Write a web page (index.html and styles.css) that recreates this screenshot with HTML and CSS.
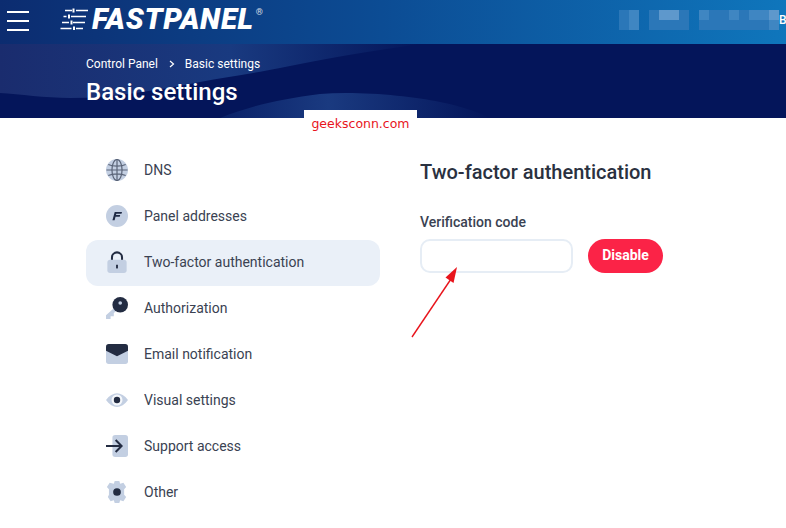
FILE: index.html
```html
<!DOCTYPE html>
<html lang="en">
<head>
    <meta charset="UTF-8">
    <meta name="viewport" content="width=device-width, initial-scale=1.0">
    <title>Basic settings</title>
    <link rel="stylesheet" href="styles.css">
</head>
<body>
    <header class="topbar">
        <button class="burger" aria-label="Menu"><span></span><span></span><span></span></button>
        <svg class="logo-mark" viewBox="0 0 28 22">
            <g stroke="#fff" stroke-width="1.300" fill="none">
                <path d="M5 2.500h7M16 2.500h12M3.500 8.500h3M11 8.500h15M2 14.500h7M13 14.500h12M0.500 20.500h11M16 20.500h7"/>
            </g>
            <g fill="#fff">
                <rect x="12.500" y="0.500" width="2" height="4"/>
                <rect x="8" y="6.500" width="2" height="4"/>
                <rect x="10.500" y="12.500" width="2" height="4"/>
                <rect x="13" y="18.500" width="2" height="4"/>
            </g>
        </svg>
        <span class="logo-text">FASTPANEL</span><span class="logo-reg">®</span>
        <div class="user">
            <div class="blur">
                <i class="c1"></i><i class="c2"></i><i class="c0"></i><i class="c1"></i><i class="c3"></i><i class="c3"></i><i class="c1"></i><i class="c0"></i><i class="c2"></i><i class="c1"></i><i class="c1"></i><i class="c2"></i><i class="c1"></i><i class="c2"></i><i class="c2"></i><i class="c3"></i>
                <i class="c1"></i><i class="c2"></i><i class="c0"></i><i class="c1"></i><i class="c1"></i><i class="c1"></i><i class="c1"></i><i class="c0"></i><i class="c1"></i><i class="c1"></i><i class="c1"></i><i class="c1"></i><i class="c1"></i><i class="c1"></i><i class="c1"></i><i class="c2"></i>
            </div>
            <span class="user-name">B</span>
        </div>
    </header>

    <section class="banner">
        <svg class="banner-bg" viewBox="0 0 786 74" preserveAspectRatio="none">
            <defs>
                <linearGradient id="swoosh" x1="0" x2="1" y1="0" y2="0">
                    <stop offset="0" stop-color="#1a2c6e"/>
                    <stop offset="0.55" stop-color="#193a80"/>
                    <stop offset="1" stop-color="#04155a"/>
                </linearGradient>
                <linearGradient id="swoosh-low" x1="0" x2="1" y1="0" y2="0">
                    <stop offset="0" stop-color="#0a2168"/>
                    <stop offset="0.4" stop-color="#1a3a80"/>
                    <stop offset="1" stop-color="#04155a"/>
                </linearGradient>
            </defs>
            <path d="M0 0H420L380 6C340 12 310 18 280 24C250 30 225 33 200 38C160 46 110 54 70 54C45 54 20 50 0 49Z" fill="url(#swoosh)"/>
            <path d="M220 74C250 62 280 55 320 50C360 47 410 52 440 58C460 62 478 68 490 74Z" fill="url(#swoosh-low)"/>
        </svg>
        <div class="crumbs">
            <span>Control Panel</span>
            <svg class="crumb-sep" viewBox="0 0 6 8"><path d="M1 1l3.500 3L1 7" fill="none" stroke="#fff" stroke-width="1.200"/></svg>
            <span>Basic settings</span>
        </div>
        <h1>Basic settings</h1>
    </section>

    <div class="watermark">geeksconn.com</div>

    <main class="page">
        <nav class="side">
            <a class="side-item">
                <svg class="ico" viewBox="0 0 24 24">
                    <circle cx="12" cy="12" r="12" fill="#c3cfe2"/>
                    <g fill="none" stroke="#5a6478" stroke-width="1.300">
                        <ellipse cx="12" cy="12" rx="5.500" ry="11.500"/>
                        <path d="M12 .5v23M.5 12h23M2.500 6c5 2.500 14 2.500 19 0M2.500 18c5-2.500 14-2.500 19 0"/>
                    </g>
                </svg>
                DNS
            </a>
            <a class="side-item">
                <svg class="ico" viewBox="0 0 24 24">
                    <circle cx="12" cy="12" r="12" fill="#c3cfe2"/>
                    <path d="M9.500 7.500h8l-.6 2h-5.600l-.4 1.500h4.600l-.5 1.800h-4.600l-1 3.700H7Z" fill="#1f2a44"/>
                </svg>
                Panel addresses
            </a>
            <a class="side-item active">
                <svg class="ico" viewBox="0 0 24 24">
                    <path d="M6.500 12V7a5.500 5.500 0 0 1 11 0v5" fill="none" stroke="#232c42" stroke-width="2.200"/>
                    <rect x="1.500" y="9.500" width="21" height="14.500" rx="3" fill="#c3cfe2"/>
                    <rect x="11" y="15" width="2" height="4" fill="#232c42"/>
                </svg>
                Two-factor authentication
            </a>
            <a class="side-item">
                <svg class="ico" viewBox="0 0 24 24">
                    <path d="M11 10L0 20v4h5v-3h3.500v-3.500l6-5Z" fill="#c3cfe2"/>
                    <circle cx="15.500" cy="8.500" r="8.500" fill="#232c42"/>
                    <circle cx="15.500" cy="6.500" r="2" fill="#c3cfe2"/>
                </svg>
                Authorization
            </a>
            <a class="side-item">
                <svg class="ico" viewBox="0 0 24 24">
                    <rect x="0" y="5" width="24" height="18" rx="3" fill="#c3cfe2"/>
                    <path d="M3 1h18a3 3 0 0 1 3 3v4.500l-12 6-12-6V4a3 3 0 0 1 3-3Z" fill="#232c42"/>
                </svg>
                Email notification
            </a>
            <a class="side-item">
                <svg class="ico" viewBox="0 0 24 24">
                    <path d="M0 12C3.500 7 8 4.500 12 4.500S20.500 7 24 12c-3.500 5-8 7.500-12 7.500S3.500 17 0 12Z" fill="#c3cfe2"/>
                    <circle cx="12" cy="12" r="6" fill="#f4f7fb"/>
                    <circle cx="12" cy="12" r="3.500" fill="#232c42"/>
                </svg>
                Visual settings
            </a>
            <a class="side-item">
                <svg class="ico" viewBox="0 0 24 24">
                    <rect x="7" y="0" width="17" height="24" rx="3" fill="#c3cfe2"/>
                    <path d="M0 12h17M10.500 5.500L17 12l-6.500 6.500" fill="none" stroke="#232c42" stroke-width="2.200"/>
                </svg>
                Support access
            </a>
            <a class="side-item">
                <svg class="ico" viewBox="0 0 24 24">
                    <path d="M9.500 0h5l1 3 3.500-1 3 4.500-2.200 2.500v6l2.200 2.500-3 4.500-3.500-1-1 3h-5l-1-3-3.500 1-3-4.500L3.200 15V9L1 6.500 4 2l4.500 1Z" fill="#c3cfe2"/>
                    <circle cx="12" cy="12" r="4.200" fill="#232c42"/>
                </svg>
                Other
            </a>
        </nav>

        <section class="panel">
            <h2>Two-factor authentication</h2>
            <label class="field-label" for="code">Verification code</label>
            <div class="field-row">
                <input class="field" id="code" type="text">
                <button class="btn-danger">Disable</button>
            </div>
        </section>
    </main>

    <svg class="arrow" viewBox="0 0 60 90">
        <path d="M2 88L41 30" stroke="#e8141c" stroke-width="1.400" fill="none"/>
        <path d="M47 18L43.500 34L35.500 28.500Z" fill="#e8141c"/>
    </svg>
</body>
</html>
```

FILE: styles.css
```css
* {
    box-sizing: border-box;
}
html, body {
    height: 100%;
}
body {
    position: relative;
    margin: 0;
    overflow: hidden;
    background: #fff;
    color: #3a4252;
    font-family: Roboto, "Liberation Sans", sans-serif;
    font-size: 14px;
}

.topbar {
    display: flex;
    align-items: center;
    height: 44px;
    padding-left: 7px;
    background: linear-gradient(to right, #0c2c70, #0c4d95 50%, #0f76bc);
    color: #fff;
}
.burger {
    display: flex;
    flex-direction: column;
    justify-content: space-between;
    width: 22px;
    height: 20px;
    padding: 0;
    margin-bottom: 3px;
    border: none;
    background: none;
}
.burger span {
    display: block;
    height: 2px;
    background: #fff;
}
.logo-mark {
    width: 28px;
    height: 22px;
    margin-left: 31px;
    margin-bottom: 6px;
}
.logo-text {
    margin-left: 4px;
    margin-bottom: 5px;
    font-size: 29.500px;
    font-weight: 900;
    font-style: italic;
    line-height: 1;
    letter-spacing: 0.700px;
}
.logo-reg {
    margin: 0 0 20px 2px;
    font-size: 9px;
    opacity: 0.8;
}
.user {
    display: flex;
    align-items: center;
    height: 20px;
    margin-left: auto;
    margin-bottom: 4px;
}
.blur {
    display: grid;
    grid-template-columns: repeat(16, 10px);
    grid-auto-rows: 10px;
    width: 160px;
}
.blur i {
    display: block;
}
.c0 {
    background: transparent;
}
.c1 {
    background: #2b77b8;
}
.c2 {
    background: #3f86c2;
}
.c3 {
    background: #5e98cc;
}
.user-name {
    width: 7px;
    overflow: hidden;
    font-size: 12px;
    font-weight: 500;
}

.banner {
    position: relative;
    height: 74px;
    padding: 13px 0 0 86px;
    background: #04155a;
    color: #fff;
}
.banner-bg {
    position: absolute;
    top: 0;
    left: 0;
    width: 100%;
    height: 100%;
}
.crumbs {
    position: relative;
    display: flex;
    align-items: center;
    height: 14px;
    font-size: 12px;
}
.crumb-sep {
    width: 6px;
    height: 8px;
    margin: 0 10px 0 11px;
}
.banner h1 {
    position: relative;
    margin: 6px 0 0;
    font-size: 24px;
    font-weight: 500;
    line-height: 30px;
}

.watermark {
    position: absolute;
    top: 110px;
    left: 304px;
    width: 113px;
    height: 21px;
    padding-top: 4px;
    background: #fff;
    color: #e8141c;
    font-family: "DejaVu Sans", sans-serif;
    font-size: 12.500px;
    line-height: 20px;
    text-align: center;
}

.page {
    display: flex;
    padding: 30px 0 0 86px;
}
.side {
    display: flex;
    flex-direction: column;
    width: 294px;
}
.side-item {
    display: flex;
    align-items: center;
    gap: 16px;
    height: 46px;
    padding: 0 0 2px 20px;
    border-radius: 12px;
    line-height: 1;
}
.side-item.active {
    background: #eaf0f8;
}
.ico {
    flex: none;
    width: 22px;
    height: 22px;
}

.panel {
    padding: 0 0 0 40px;
}
.panel h2 {
    margin: 9px 0 0;
    color: #2a3140;
    font-size: 20px;
    font-weight: 500;
    line-height: 30px;
}
.field-label {
    display: block;
    margin-top: 25px;
    color: #3a4252;
    font-size: 14px;
    font-weight: 500;
    line-height: 20px;
}
.field-row {
    display: flex;
    gap: 15px;
    margin-top: 7px;
}
.field {
    width: 153px;
    height: 34px;
    border: 2px solid #e6edf5;
    border-radius: 10px;
    background: #fff;
}
.btn-danger {
    width: 75px;
    height: 34px;
    padding: 0 0 2px;
    border: none;
    border-radius: 17px;
    background: #fb2347;
    color: #fff;
    font-family: inherit;
    font-size: 14px;
    font-weight: 700;
}

.arrow {
    position: absolute;
    top: 249px;
    left: 410px;
    width: 60px;
    height: 90px;
}
```
